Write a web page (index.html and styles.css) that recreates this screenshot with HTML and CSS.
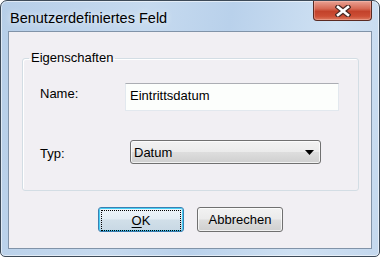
FILE: index.html
```html
<!DOCTYPE html>
<html lang="de">
<head>
    <meta charset="UTF-8">
    <title>Benutzerdefiniertes Feld</title>
    <link rel="stylesheet" href="styles.css">
</head>
<body>
    <div class="window">
        <div class="titlebar">
            <span class="title">Benutzerdefiniertes Feld</span>
            <div class="close-btn">
                <svg width="16" height="12" viewBox="0 0 16 12">
                    <path d="M3 2 L13 10 M13 2 L3 10" stroke="#4a2a26" stroke-width="5" stroke-linecap="square"/>
                    <path d="M3 2 L13 10 M13 2 L3 10" stroke="#ffffff" stroke-width="2.6" stroke-linecap="square"/>
                </svg>
            </div>
        </div>

        <div class="client">
            <fieldset class="group">
                <legend>Eigenschaften</legend>

                <div class="row row-name">
                    <label class="label">Name:</label>
                    <input class="text-input" type="text" value="Eintrittsdatum">
                </div>

                <div class="row row-type">
                    <label class="label label-type">Typ:</label>
                    <div class="combo">
                        <span>Datum</span>
                        <svg width="9" height="5" viewBox="0 0 9 5"><path d="M0 0 H9 L4.5 5 Z" fill="#000"/></svg>
                    </div>
                </div>
            </fieldset>

            <div class="buttons">
                <button class="btn btn-default"><span class="focus"><u>O</u>K</span></button>
                <button class="btn">Abbrechen</button>
            </div>
        </div>
    </div>
</body>
</html>
```

FILE: styles.css
```css
body {
    margin: 0;
    font-family: "Liberation Sans", Arial, sans-serif;
    background: #ffffff;
}
.window {
    width: 380px;
    height: 257px;
    box-sizing: border-box;
    border: 1px solid #3d4a58;
    border-radius: 7px 7px 5px 5px;
    background: linear-gradient(100deg, #b6cee8 0%, #c6daef 35%, #b9d1eb 55%, #cfe1f3 80%, #c4d8ee 100%);
    box-shadow: inset 0 0 0 1px rgba(255, 255, 255, 0.55);
    overflow: hidden;
}
.titlebar {
    height: 30px;
    display: flex;
    justify-content: space-between;
    align-items: flex-start;
}
.title {
    font-size: 14.5px;
    line-height: 20px;
    margin: 7px 0 0 9px;
    color: #000;
    text-shadow: 0 0 6px rgba(255, 255, 255, 0.9);
}
.close-btn {
    width: 59px;
    height: 20px;
    margin-right: 7px;
    box-sizing: border-box;
    border: 1px solid #5a2a22;
    border-top: none;
    border-radius: 0 0 4px 4px;
    background: linear-gradient(#e9a294 0%, #d66a55 40%, #c3422b 55%, #cc4e35 80%, #dd7a60 100%);
    box-shadow: inset 0 0 0 1px rgba(255, 210, 200, 0.35);
    display: flex;
    align-items: center;
    justify-content: center;
}
.client {
    height: 216px;
    margin: 0 7px 7px;
    border: 1px solid #8193a8;
    background: #f1eff3;
}
.group {
    width: 337px;
    box-sizing: border-box;
    margin: 18px 0 0 13px;
    padding: 0 0 26px 6px;
    border: 1px solid #d3dde4;
    border-radius: 3px;
    box-shadow: inset 1px 1px 0 #ffffff;
}
.group legend {
    padding: 0 2px;
    font-size: 13px;
    line-height: 16px;
    color: #000;
}
.row {
    display: flex;
    align-items: flex-start;
}
.row-name {
    margin-top: 17px;
}
.row-type {
    margin-top: 29px;
}
.label {
    font-size: 13px;
    line-height: 16px;
    color: #000;
    margin: 3px 0 0 11px;
    width: 85px;
}
.label-type {
    margin-top: 6px;
    width: 90px;
}
.text-input {
    width: 214px;
    height: 28px;
    box-sizing: border-box;
    margin: 0;
    padding: 0 4px 3px;
    border: 1px solid #e2e8ee;
    border-top-color: #abadb3;
    background: #fcfefc;
    font-family: "Liberation Sans", Arial, sans-serif;
    font-size: 13px;
    color: #000;
    outline: none;
}
.combo {
    width: 191px;
    height: 24px;
    box-sizing: border-box;
    border: 1px solid #707070;
    border-radius: 3px;
    background: linear-gradient(#f2f2f2 0%, #ebebeb 48%, #dddddd 52%, #cfcfcf 100%);
    box-shadow: inset 0 0 0 1px rgba(255, 255, 255, 0.7);
    display: flex;
    justify-content: space-between;
    align-items: center;
    padding: 1px 6px 0 3px;
    font-size: 13px;
    line-height: 21px;
    color: #000;
}
.buttons {
    display: flex;
    gap: 13px;
    margin: 16px 0 0 89px;
}
.btn {
    width: 86px;
    height: 25px;
    box-sizing: border-box;
    padding: 0;
    border: 1px solid #707070;
    border-radius: 3px;
    background: linear-gradient(#f2f2f2 0%, #ebebeb 48%, #dddddd 52%, #cfcfcf 100%);
    box-shadow: inset 0 0 0 1px rgba(255, 255, 255, 0.7);
    font-family: "Liberation Sans", Arial, sans-serif;
    font-size: 13px;
    line-height: 23px;
    color: #000;
}
.btn-default {
    border-color: #3c7fb1;
    background: linear-gradient(#eef5fa 0%, #e3edf4 48%, #d1dfe9 52%, #c8d8e4 100%);
    box-shadow: inset 0 0 0 1px #48d0f6;
    padding: 2px;
}
.focus {
    display: block;
    height: 19px;
    line-height: 19px;
    border: 1px dotted #000;
}
.focus u {
    text-decoration-thickness: 1px;
    text-underline-offset: 2px;
}
```
